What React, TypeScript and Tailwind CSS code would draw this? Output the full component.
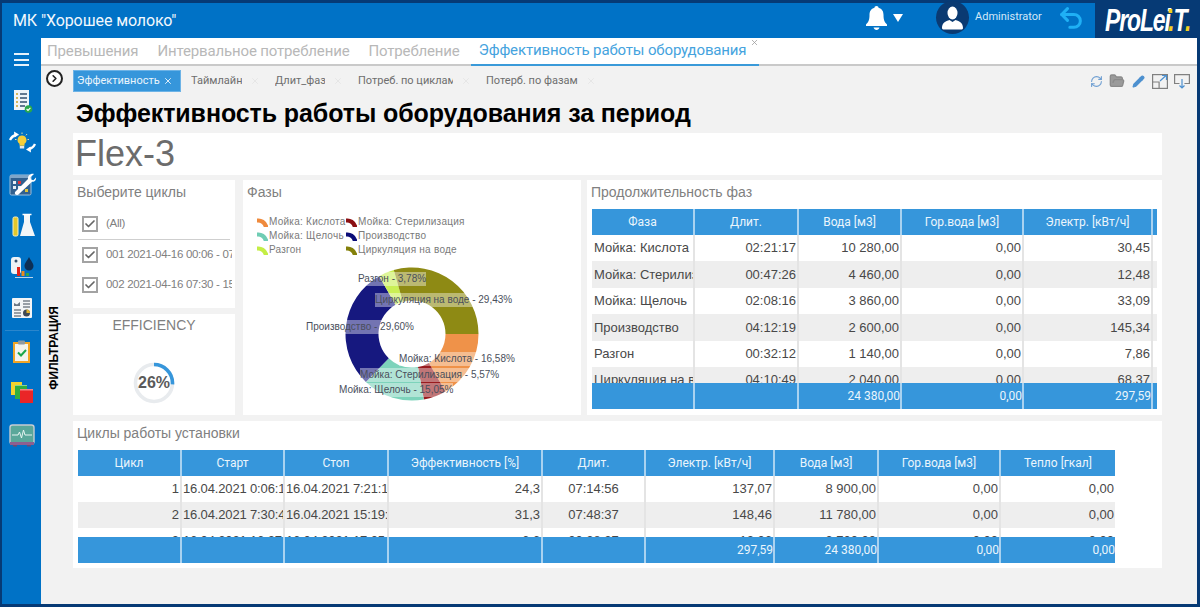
import React from 'react';
import { Check, FolderOpen, Pencil, RefreshCw, Undo2, X, ChevronRight } from 'lucide-react';

const phaseGrid = 'grid grid-cols-[103px_104px_103px_122px_129px_5px]';
const cycleGrid = 'grid grid-cols-[104px_103px_104px_154px_103px_129px_104px_122px_114px]';

const slices = [
  { pct: 16.58, color: '#ef9249' },
  { pct: 5.57, color: '#981b1e' },
  { pct: 15.05, color: '#7dd3bb' },
  { pct: 29.6, color: '#16187f' },
  { pct: 3.78, color: '#c9ef55' },
  { pct: 29.43, color: '#8e8a14' },
];

const legend = [
  { label: 'Мойка: Кислота', color: '#ef8a3c' },
  { label: 'Мойка: Стерилизация', color: '#8b0f12' },
  { label: 'Мойка: Щелочь', color: '#6fcdb4' },
  { label: 'Производство', color: '#0b0d78' },
  { label: 'Разгон', color: '#c4ee45' },
  { label: 'Циркуляция на воде', color: '#84800a' },
];

const chartLabels = [
  { text: 'Разгон - 3,78%', cls: 'left-[115px] top-[92px]' },
  { text: 'Циркуляция на воде - 29,43%', cls: 'left-[132px] top-[113px]' },
  { text: 'Производство - 29,60%', cls: 'left-[63px] top-[140px]' },
  { text: 'Мойка: Кислота - 16,58%', cls: 'left-[156px] top-[172px]' },
  { text: 'Мойка: Стерилизация - 5,57%', cls: 'left-[117px] top-[188px]' },
  { text: 'Мойка: Щелочь - 15,05%', cls: 'left-[96px] top-[203px]' },
];

const phaseRows = [
  ['Мойка: Кислота', '02:21:17', '10 280,00', '0,00', '30,45'],
  ['Мойка: Стерилизация', '00:47:26', '4 460,00', '0,00', '12,48'],
  ['Мойка: Щелочь', '02:08:16', '3 860,00', '0,00', '33,09'],
  ['Производство', '04:12:19', '2 600,00', '0,00', '145,34'],
  ['Разгон', '00:32:12', '1 140,00', '0,00', '7,86'],
  ['Циркуляция на воде', '04:10:49', '2 040,00', '0,00', '68,37'],
];

const cycleRows = [
  ['1', '16.04.2021 0:06:19', '16.04.2021 7:21:15', '24,3', '07:14:56', '137,07', '8 900,00', '0,00', '0,00'],
  ['2', '16.04.2021 7:30:40', '16.04.2021 15:19:17', '31,3', '07:48:37', '148,46', '11 780,00', '0,00', '0,00'],
  ['3', '16.04.2021 16:37:03', '16.04.2021 17:05:30', '6,6', '00:28:27', '12,06', '3 700,00', '0,00', '0,00'],
];

function arcPath(start: number, end: number, r: number, ri: number) {
  const a0 = (start / 100) * Math.PI * 2;
  const a1 = (end / 100) * Math.PI * 2;
  const large = end - start > 50 ? 1 : 0;
  const p = (rad: number, a: number) => `${(rad * Math.cos(a)).toFixed(2)} ${(rad * Math.sin(a)).toFixed(2)}`;
  return `M${p(r, a0)} A${r} ${r} 0 ${large} 1 ${p(r, a1)} L${p(ri, a1)} A${ri} ${ri} 0 ${large} 0 ${p(ri, a0)} Z`;
}

function Donut() {
  let acc = 0;
  return (
    <svg width="140" height="140" viewBox="-70 -70 140 140" className="absolute left-[99px] top-[84px]">
      {slices.map(s => {
        const d = arcPath(acc, acc + s.pct, 66.5, 33.5);
        acc += s.pct;
        return <path key={s.color} d={d} fill={s.color} />;
      })}
    </svg>
  );
}

function LegendItem({ label, color }: { label: string; color: string }) {
  return (
    <div className="flex items-center gap-[1px] h-[14px]">
      <svg width="11" height="10" viewBox="0 0 11 10" className="shrink-0">
        <path d="M0 1.5 A10 10 0 0 1 11 8.5 L11 10 L6.8 10 A6 6 0 0 0 0 5.5 Z" fill={color} />
      </svg>
      <span className="whitespace-nowrap">{label}</span>
    </div>
  );
}

function CheckRow({ label, divider }: { label: string; divider?: boolean }) {
  return (
    <div className={divider ? 'flex items-center gap-[8px] h-[31px] mx-[5px] pl-[4px] border-b border-[#cfcfcf]' : 'flex items-center gap-[8px] h-[30px] pl-[9px]'}>
      <span className="w-[16px] h-[16px] shrink-0 border-2 border-[#a3a3a3] flex items-center justify-center">
        <Check size={12} strokeWidth={3.4} color="#666666" />
      </span>
      <span className="whitespace-nowrap overflow-hidden w-[126px] text-[11.5px] tracking-[-0.3px] text-[#808080]">{label}</span>
    </div>
  );
}

function Gauge() {
  const r = 18.5;
  const c = 2 * Math.PI * r;
  return (
    <div className="relative w-[44px] h-[44px]">
      <svg width="44" height="44" viewBox="0 0 44 44">
        <circle cx="22" cy="22" r={r} fill="none" stroke="#e8ebee" strokeWidth="3.6" />
        <circle
          cx="22"
          cy="22"
          r={r}
          fill="none"
          stroke="#3696db"
          strokeWidth="3.6"
          strokeDasharray={`${c * 0.26} ${c}`}
          transform="rotate(-90 22 22)"
        />
      </svg>
      <span className="absolute inset-0 flex items-center justify-center text-[16px] font-bold text-[#5a5a5a]">26%</span>
    </div>
  );
}

function HeaderRow({ grid, labels }: { grid: string; labels: string[] }) {
  return (
    <div className={`${grid} h-[26px] bg-[#3696db] text-[12px] text-[#eaf5fc] font-['Roboto',sans-serif]`}>
      {labels.map((l, i) => (
        <div key={i} className="border-r-2 border-[#a9d2f0] last:border-r-0 flex items-center justify-center whitespace-nowrap overflow-hidden">
          {l}
        </div>
      ))}
    </div>
  );
}

function FooterRow({ grid, values }: { grid: string; values: string[] }) {
  return (
    <div className={`${grid} h-[26px] bg-[#3696db] text-[12px] text-[#eaf5fc] font-['Roboto',sans-serif]`}>
      {values.map((v, i) => (
        <div key={i} className="border-r-2 border-[#a9d2f0] last:border-r-0 flex items-center justify-end whitespace-nowrap overflow-hidden">
          {v}
        </div>
      ))}
    </div>
  );
}

function PhaseTable() {
  return (
    <div className="mt-[9px] mx-[5px] text-[13px] text-[#484848]">
      <HeaderRow grid={phaseGrid} labels={['Фаза', 'Длит.', 'Вода [м3]', 'Гор.вода [м3]', 'Электр. [кВт/ч]', '']} />
      <div className="h-[148px] overflow-hidden">
        {phaseRows.map((row, i) => (
          <div key={i} className={`${phaseGrid} h-[26.4px] ${i % 2 ? 'bg-[#eeeeee]' : 'bg-white'}`}>
            <div className="border-r-2 border-[#e4e4e4] pl-[2px] flex items-center whitespace-nowrap overflow-hidden">{row[0]}</div>
            {row.slice(1).map((v, j) => (
              <div key={j} className="border-r-2 border-[#e4e4e4] pr-[1px] flex items-center justify-end whitespace-nowrap overflow-hidden">{v}</div>
            ))}
            <div />
          </div>
        ))}
      </div>
      <FooterRow grid={phaseGrid} values={['', '', '24 380,00', '0,00', '297,59', '']} />
    </div>
  );
}

function CycleTable() {
  return (
    <div className="mt-[9px] ml-[5px] w-[1037px] text-[13px] text-[#484848]">
      <HeaderRow grid={cycleGrid} labels={['Цикл', 'Старт', 'Стоп', 'Эффективность [%]', 'Длит.', 'Электр. [кВт/ч]', 'Вода [м3]', 'Гор.вода [м3]', 'Тепло [гкал]']} />
      <div className="h-[61px] overflow-hidden">
        {cycleRows.map((row, i) => (
          <div key={i} className={`${cycleGrid} h-[26px] ${i % 2 ? 'bg-[#eeeeee]' : 'bg-white'}`}>
            {row.map((v, j) => (
              <div
                key={j}
                className={`border-r-2 border-[#e4e4e4] last:border-r-0 flex items-center whitespace-nowrap overflow-hidden ${
                  j === 1 || j === 2 ? 'pl-[1px] tracking-[-0.15px]' : j === 4 ? 'justify-center' : 'justify-end pr-[1px]'
                }`}
              >
                {v}
              </div>
            ))}
          </div>
        ))}
      </div>
      <FooterRow grid={cycleGrid} values={['', '', '', '', '', '297,59', '24 380,00', '0,00', '0,00']} />
    </div>
  );
}

function SubTab({ label, textCls }: { label: string; textCls: string }) {
  return (
    <div className="flex items-center gap-[8px] pr-[15px] text-[11px] text-[#6e6e6e]">
      <span className={`whitespace-nowrap overflow-hidden ${textCls}`}>{label}</span>
      <X size={10} color="#e3e3e3" />
    </div>
  );
}

function Doc({ children }: { children: React.ReactNode }) {
  return (
    <svg width="30" height="30" viewBox="0 0 30 30">
      {children}
    </svg>
  );
}

const sideIcons = [
  <Doc key="a">
    <rect x="7" y="4" width="15" height="20" fill="#eef3f8" />
    <path d="M9 8h2M9 12h2M9 16h2M9 20h2" stroke="#c9a32c" strokeWidth="1.6" />
    <path d="M13 8h7M13 12h7M13 16h7M13 20h5" stroke="#35506e" strokeWidth="1.4" />
    <circle cx="21.5" cy="23" r="3.8" fill="#2aa84a" />
    <path d="M19.6 23l1.4 1.4 2.4-2.6" stroke="#fff" strokeWidth="1.1" fill="none" />
  </Doc>,
  <Doc key="b">
    <path d="M15 8.500a4.500 4.500 0 0 1 2.500 8.200v2h-5v-2A4.500 4.500 0 0 1 15 8.500z" fill="#f5cf3a" />
    <rect x="12.800" y="19" width="4.400" height="2.500" fill="#e8e8e8" />
    <path d="M15 5.500v1.500M10 7l1 1.300M20 7l-1 1.300M8 12.500h1.500M20.500 12.500H22" stroke="#f7e9a0" strokeWidth=".9" />
    <path d="M3 13c1.500-3 3.500-4.500 6-5" stroke="#fff" strokeWidth="2.400" fill="none" />
    <path d="M7 4.500l5 3-4.500 3z" fill="#fff" />
    <path d="M28 17c-1.500 3-3.500 4.500-6 5" stroke="#fff" strokeWidth="2.400" fill="none" />
    <path d="M24 25.500l-5-3 4.500-3z" fill="#fff" />
  </Doc>,
  <Doc key="c">
    <rect x="3" y="6" width="21" height="20" rx="1.500" fill="#31608f" stroke="#9fc1dd" />
    <rect x="3" y="6" width="21" height="3" fill="#7fa6c9" />
    <path d="M6 12h3v3H6zM6 17h3v3H6zM11 17h3v3h-3z" fill="#e8eef4" />
    <rect x="11" y="12" width="3" height="3" fill="#e0323a" />
    <rect x="18" y="20" width="3" height="3" fill="#e0c33a" />
    <path d="M27 5l-3.500 3.200.6 2.400 2.300.6L29 8.500c.4 2-1 4.500-4 4.300L12 25c-1.500 2-5 .6-4-2l13-13C20.500 6.500 24 4 27 5z" fill="#fff" />
  </Doc>,
  <Doc key="d">
    <rect x="6" y="7" width="5" height="19" rx="1.500" fill="#e3c72c" stroke="#f4efc2" strokeWidth="1" />
    <path d="M17 4h6v8l5 14H13l4-14z" fill="#f3f6f8" />
    <path d="M15.500 4.500h9" stroke="#fff" strokeWidth="1.500" />
  </Doc>,
  <Doc key="e">
    <rect x="4" y="5" width="10" height="17" rx="3" fill="#eef2f6" />
    <circle cx="9" cy="9" r="1.500" fill="#35506e" />
    <rect x="10" y="15" width="3" height="9" fill="#e2231a" />
    <rect x="14.500" y="19" width="3" height="5" fill="#e98a1c" />
    <rect x="19" y="21" width="3" height="3" fill="#2fa54a" />
    <path d="M22 5c2 4 4.500 6 4.500 9a4.500 4.500 0 0 1-9 0c0-3 2.500-5 4.500-9z" fill="#0d2f55" />
    <rect x="8" y="25" width="18" height="1" fill="#b9d4ea" />
  </Doc>,
  <Doc key="f">
    <rect x="5" y="5" width="20" height="20" rx="1" fill="#f3f5f7" />
    <path d="M7 13V10l3 1.500 3-2.500v4z" fill="#6b7785" />
    <path d="M16 8h7M16 11h7M16 14h7M7 17h7M7 20h7M7 23h7" stroke="#3f4a57" strokeWidth="1.200" />
    <circle cx="19.500" cy="20" r="3.500" fill="#3f4a57" />
    <path d="M19.500 20v-3.500a3.500 3.500 0 0 1 3.500 3.500z" fill="#e3b52c" />
  </Doc>,
  <Doc key="g">
    <rect x="7" y="6" width="15" height="19" fill="#f2f3ee" stroke="#f0a526" strokeWidth="2" />
    <rect x="11" y="3.500" width="7" height="4" rx="1" fill="#8f9aa3" />
    <path d="M11 15.500l3 3 5-5.500" stroke="#1aa64a" strokeWidth="2" fill="none" />
  </Doc>,
  <Doc key="h">
    <rect x="4" y="4" width="11" height="13" fill="#f3d32c" />
    <rect x="8" y="7" width="12" height="14" fill="#2fae3f" />
    <rect x="13" y="11" width="13" height="14" fill="#ea2527" />
    <path d="M13 11h13v1.500H13zM8 7h12v1H8z" fill="#fff" fillOpacity=".45" />
  </Doc>,
  <Doc key="i">
    <rect x="3" y="5" width="24" height="19" rx="2.500" fill="#5aa79a" stroke="#c6ccd2" strokeWidth="1.400" />
    <path d="M5 15h6l1.500-3 2 6 2-8 1.500 5h7" stroke="#e6f4f1" strokeWidth="1" fill="none" />
    <rect x="3" y="22" width="24" height="3" fill="#8c5f90" />
    <rect x="6" y="25" width="4" height="1.500" fill="#6e4a72" />
    <rect x="20" y="25" width="4" height="1.500" fill="#6e4a72" />
  </Doc>,
];

export default function App() {
  const tabs = ['Превышения', 'Интервальное потребление', 'Потребление'];
  return (
    <div className="w-[1200px] h-[607px] overflow-hidden bg-[#063a75] pt-[3px] pl-[2px] pr-[3px] pb-[3px] flex flex-col font-['Liberation_Sans',sans-serif]">
      {/* Header */}
      <div className="h-[35px] shrink-0 flex">
        <div className="flex-1 bg-[#0072c6] flex items-center pl-[11px] text-white">
          <span className="text-[16px] tracking-[-0.1px] font-['Roboto',sans-serif] text-[#f2f8fd]">МК "Хорошее молоко"</span>
          <div className="ml-auto h-full pb-[6px] flex items-center">
            <svg width="23" height="26" viewBox="0 0 23 26" fill="#fff">
              <path d="M11.500 1c1.300 0 2 .8 2 1.800C17 3.700 18.500 6.500 18.500 10c0 5 1 7 3.500 9.500v1.500H1v-1.500C3.500 17 4.500 15 4.500 10c0-3.500 1.500-6.300 5-7.200 0-1 .7-1.800 2-1.800z" />
              <path d="M8.500 22.500h6c-.5 1.500-1.500 2.500-3 2.500s-2.500-1-3-2.500z" />
            </svg>
            <svg width="10" height="8" viewBox="0 0 10 8" className="ml-[5px] mr-[33px]">
              <path d="M0 0h10L5 8z" fill="#fff" />
            </svg>
            <div className="w-[33px] h-[33px] shrink-0 rounded-full bg-[#0a3a72] overflow-hidden flex items-center justify-center">
              <svg width="33" height="33" viewBox="0 0 33 33" fill="#fff">
                <ellipse cx="16.500" cy="12" rx="5" ry="6.500" />
                <path d="M6 27c0-5 3.500-7 7.500-8l3 2 3-2c4 1 7.500 3 7.500 8 0 1-1 1.500-2 1.500H8c-1 0-2-.5-2-1.500z" />
              </svg>
            </div>
            <span className="ml-[6px] text-[11px] text-[#d3e8f8] font-['Roboto',sans-serif] w-[70px] whitespace-nowrap">Administrator</span>
            <Undo2 size={28} strokeWidth={2.600} color="#1fb0f5" className="ml-[12px] mr-[10px]" />
          </div>
        </div>
        <div className="w-[102px] pl-[10px] flex items-center overflow-hidden">
          <span className="text-[31px] leading-none font-bold italic text-white tracking-[-1.5px] origin-left scale-x-[.74] whitespace-nowrap">
            ProLe
            <span className="relative">
              i
              <span className="absolute left-[6px] top-[6px] w-[5px] h-[4px] bg-[#f2cf1f]" />
            </span>
            <span className="text-[#f2cf1f] -ml-[2px]">.</span>T<span className="text-[#f2cf1f] -ml-[2px]">.</span>
          </span>
        </div>
      </div>

      <div className="flex-1 flex min-h-0">
        {/* Sidebar */}
        <div className="w-[39px] shrink-0 bg-[#0072c6] flex flex-col items-center pt-[1px]">
          <div className="h-[41px] flex items-center">
            <div className="w-[15px] h-[13px] flex flex-col justify-between">
              <div className="h-[2px] bg-[#e6f2fb]" />
              <div className="h-[2px] bg-[#e6f2fb]" />
              <div className="h-[2px] bg-[#e6f2fb]" />
            </div>
          </div>
          {sideIcons.map((icon, i) => (
            <React.Fragment key={i}>
              {i === 6 && <div className="w-[34px] h-[1px] bg-[#2b86cc] mt-[1px]" />}
              <div className="h-[41.500px] flex items-center justify-center shrink-0">{icon}</div>
            </React.Fragment>
          ))}
        </div>

        <div className="flex-1 min-w-0 flex flex-col bg-[#f2f2f2]">
          {/* Main tabs */}
          <div className="h-[28px] shrink-0 bg-white border-b-2 border-[#c9c9c9] flex gap-[3px] text-[15px] tracking-[-0.15px] font-['Roboto',sans-serif]">
            {tabs.map(t => (
              <div key={t} className="px-[8px] h-[26px] flex items-center text-[#b8b8b8] whitespace-nowrap first:-ml-[2px]">{t}</div>
            ))}
            <div className="relative pl-[8px] pr-[13px] h-[28px] border-b-2 border-[#3a9ad9] flex items-center pb-[2px] text-[#45a3de] whitespace-nowrap">
              Эффективность работы оборудования
              <X size={9} color="#9a9a9a" className="absolute right-[0px] top-[0px]" />
            </div>
          </div>

          <div className="flex-1 flex min-h-0">
            {/* Filter strip */}
            <div className="w-[32px] shrink-0 pr-[6px] flex flex-col items-center pt-[4px]">
              <div className="w-[17px] h-[17px] rounded-full border-2 border-[#222] bg-white flex items-center justify-center">
                <ChevronRight size={11} strokeWidth={3.500} color="#222" />
              </div>
              <div className="mt-[219px] [writing-mode:vertical-rl] rotate-180 text-[12px] font-bold text-black whitespace-nowrap">ФИЛЬТРАЦИЯ</div>
            </div>

            <div className="flex-1 min-w-0 flex flex-col">
              {/* Sub tabs */}
              <div className="h-[26px] pt-[4px] flex items-start font-['Roboto',sans-serif]">
                <div className="w-[108px] h-[22px] mr-[10px] bg-[#3696db] border border-[#6db3e6] text-[#eaf5fc] text-[11px] flex items-center px-[3px] justify-between">
                  <span>Эффективность</span>
                  <X size={10} color="#fff" className="mr-[4px]" />
                </div>
                <div className="flex h-[22px]">
                  <SubTab label="Таймлайн" textCls="w-[51px]" />
                  <SubTab label="Длит_фаз" textCls="w-[50px]" />
                  <SubTab label="Потреб. по циклам" textCls="w-[95px]" />
                  <SubTab label="Потерб. по фазам" textCls="w-[92px]" />
                </div>
                <div className="ml-auto mr-[7px] mt-[1px] flex items-center gap-[6px] h-[20px]">
                  <RefreshCw size={13} color="#6f9fd2" strokeWidth={2} />
                  <FolderOpen size={16} color="#8a8a8a" fill="#9a9a9a" />
                  <Pencil size={13} color="#4d90cf" fill="#4d90cf" className="mx-[1px]" />
                  <svg width="16" height="15" viewBox="0 0 16 15" fill="none" stroke="#808080" strokeWidth="1.200">
                    <rect x=".6" y=".6" width="14.800" height="13.800" />
                    <path d="M.6 8h6.500v6.400" />
                    <path d="M8 7l6-5.500M10 1.500h4.500V6" stroke="#4d90cf" />
                  </svg>
                  <svg width="16" height="15" viewBox="0 0 16 15" fill="none" stroke="#808080" strokeWidth="1.200">
                    <path d="M5.500 9.500H.6V.6h14.800v8.900h-5" />
                    <path d="M8 5v9M5.500 11.500L8 14l2.500-2.500" stroke="#4d90cf" />
                  </svg>
                </div>
              </div>

              <div className="pr-[35px] flex flex-col">
                <h1 className="h-[41px] pl-[3px] pt-[7px] text-[25px] tracking-[-0.09px] leading-[28px] font-bold text-black whitespace-nowrap">
                  Эффективность работы оборудования за период
                </h1>

                <div className="h-[42px] bg-white px-[2px] flex items-center text-[36px] text-[#6c6c6c]">Flex-3</div>

                <div className="mt-[5px] h-[235px] flex">
                  {/* Left column */}
                  <div className="w-[162px] flex flex-col gap-[6px] shrink-0">
                    <div className="h-[128px] bg-white overflow-hidden">
                      <div className="pl-[4px] pt-[4px] pb-[9px] text-[14px] leading-[16px] text-[#808080]">Выберите циклы</div>
                      <CheckRow label="(All)" divider />
                      <CheckRow label="001 2021-04-16 00:06 - 07:21" />
                      <CheckRow label="002 2021-04-16 07:30 - 15:19" />
                    </div>
                    <div className="flex-1 bg-white flex flex-col items-center">
                      <div className="pt-[3px] text-[14px] leading-[16px] text-[#808080]">EFFICIENCY</div>
                      <div className="mt-[28px]"><Gauge /></div>
                    </div>
                  </div>

                  {/* Phases */}
                  <div className="relative w-[338px] ml-[8px] bg-white shrink-0 overflow-hidden">
                    <div className="pl-[4px] pt-[4px] text-[14px] leading-[16px] text-[#808080]">Фазы</div>
                    <div className="mt-[15px] ml-[14px] grid grid-cols-[89px_auto] w-fit text-[10px] tracking-[0.25px] leading-[14px] text-[#7a7a7a]">
                      {legend.map(l => <LegendItem key={l.label} {...l} />)}
                    </div>
                    <Donut />
                    {chartLabels.map(l => (
                      <div key={l.text} className={`absolute ${l.cls} h-[14px] leading-[14px] text-[10px] text-[#4a4f5c] bg-white/40 whitespace-nowrap`}>
                        {l.text}
                      </div>
                    ))}
                  </div>

                  {/* Phase durations */}
                  <div className="flex-1 min-w-0 ml-[6px] bg-white overflow-hidden">
                    <div className="pl-[4px] pt-[4px] text-[14px] leading-[16px] text-[#808080]">Продолжительность фаз</div>
                    <PhaseTable />
                  </div>
                </div>

                {/* Cycles */}
                <div className="mt-[6px] h-[147px] bg-white overflow-hidden">
                  <div className="pl-[4px] pt-[4px] text-[14px] leading-[16px] text-[#808080]">Циклы работы установки</div>
                  <CycleTable />
                </div>
              </div>
            </div>
          </div>
        </div>
      </div>
    </div>
  );
}
